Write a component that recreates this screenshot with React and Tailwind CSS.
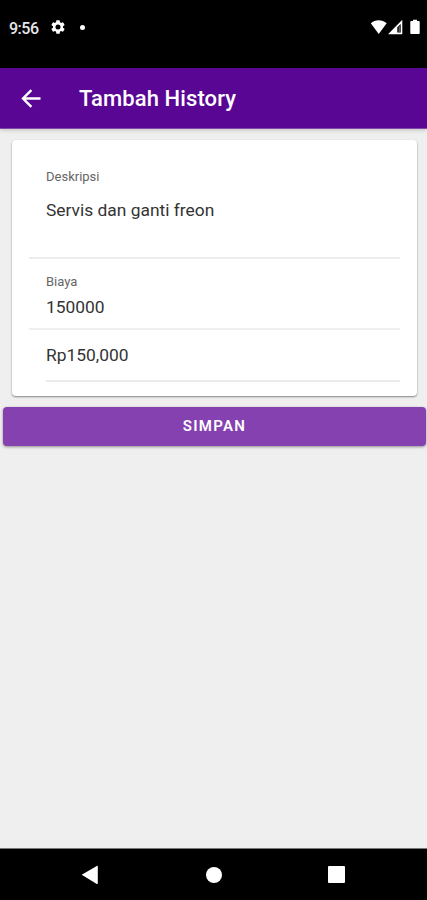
const StatusBar = () => {
    return (
        <div className="h-[68px] shrink-0 bg-black text-white flex items-start">
            <p className="w-[42px] pl-[9px] pt-[19px] text-[16px] leading-5 font-medium tracking-[-0.5px] text-gray-200">9:56</p>

            <svg className="ml-[9px] mt-[20px] w-[14px] h-[14px]" viewBox="2 2 20 20" fill="white">
                <path d="M19.14 12.94c.04-.3.06-.61.06-.94 0-.32-.02-.64-.07-.94l2.03-1.58c.18-.14.23-.41.12-.61l-1.92-3.32c-.12-.22-.37-.29-.59-.22l-2.39.96c-.5-.38-1.03-.7-1.62-.94l-.36-2.54c-.04-.24-.24-.41-.48-.41h-3.84c-.24 0-.43.17-.47.41l-.36 2.54c-.59.24-1.13.57-1.62.94l-2.39-.96c-.22-.08-.47 0-.59.22L2.74 8.87c-.12.21-.08.47.12.61l2.03 1.58c-.05.3-.09.63-.09.94s.02.64.07.94l-2.03 1.58c-.18.14-.23.41-.12.61l1.92 3.32c.12.22.37.29.59.22l2.39-.96c.5.38 1.03.7 1.62.94l.36 2.54c.05.24.24.41.48.41h3.84c.24 0 .44-.17.47-.41l.36-2.54c.59-.24 1.13-.56 1.62-.94l2.39.96c.22.08.47 0 .59-.22l1.92-3.32c.12-.22.07-.47-.12-.61l-2.01-1.58zM12 15.6a3.6 3.6 0 1 1 0-7.2 3.6 3.6 0 0 1 0 7.2z" />
            </svg>
            <span className="ml-[15px] mt-[25px] w-[5px] h-[5px] rounded-full bg-white"></span>

            <div className="ml-auto mr-[7px] mt-[19px] flex items-start">
                <svg className="w-[17px] h-[16px]" viewBox="0 0 17 16" fill="white">
                    <path d="M0.8 4.2C5 .2 12.2 .2 16.7 4.2L8.7 15z" />
                </svg>
                <svg className="w-[15px] h-[16px] ml-px" viewBox="0 0 15 16" fill="white">
                    <path fillRule="evenodd" d="M0 15.2L14.3 .8V15.2zM9.3 8.3V13.5H12.7V4.9z" />
                    <path d="M10.7 7.2h1v6.3h-1z" fill="#888" />
                </svg>
                <svg className="w-[10px] h-[16px] ml-[7px]" viewBox="0 0 10 16" fill="white">
                    <path d="M3 .8h4v1.2h1.7c.6 0 1 .4 1 1V14c0 .6-.4 1-1 1H1.3c-.6 0-1-.4-1-1V3c0-.6.4-1 1-1H3z" />
                </svg>
            </div>
        </div>
    )
}

const AppBar = () => {
    return (
        <header className="relative h-[61px] shrink-0 bg-[#5a0695] border-b border-[#8148a8] text-white flex items-center shadow-[0_1px_4px_rgba(0,0,0,0.2)]">
            <button className="ml-[21px] w-5 h-5">
                <svg className="w-5 h-5" viewBox="0 0 20 20" fill="none" stroke="white" strokeWidth="2.4">
                    <path d="M19.5 10.5H2.2M10.4 2.1L2 10.5l8.4 8.4" />
                </svg>
            </button>
            <h1 className="ml-[38px] pt-px text-[22px] leading-7 font-medium tracking-[0.1px]">Tambah History</h1>
        </header>
    )
}

const HistoryForm = () => {
    return (
        <div className="mt-[11px] ml-[12px] mr-[10px] h-[256px] rounded-[4px] bg-white pl-[17px] pr-[17px] shadow-[0_1px_2px_rgba(0,0,0,0.45)]">
            <div className="h-[119px] pl-[17px] pt-[29px] border-b-2 border-[#ececec]">
                <p className="text-[13px] leading-4 text-[#666]">Deskripsi</p>
                <p className="mt-[15px] text-[17.4px] leading-5 text-[#333]">Servis dan ganti freon</p>
            </div>
            <div className="h-[71px] pl-[17px] pt-[15px] border-b-2 border-[#efefef]">
                <p className="text-[13px] leading-4 text-[#666]">Biaya</p>
                <p className="mt-[7px] text-[17.4px] leading-5 text-[#333]">150000</p>
            </div>
            <div className="h-[52px] ml-[17px] pt-[15px] border-b-2 border-[#ebebeb]">
                <p className="text-[17.4px] leading-5 text-[#333]">Rp150,000</p>
            </div>
        </div>
    )
}

const NavigationBar = () => {
    return (
        <nav className="h-[52px] shrink-0 bg-black border-t border-[#777] flex items-center">
            <svg className="ml-[81px] w-[18px] h-5" viewBox="0 0 18 20" fill="white">
                <path d="M.7 9.8L15.8.9c.5-.3 1 0 1 .5v17c0 .5-.5.8-1 .5z" />
            </svg>
            <span className="ml-[107px] w-4 h-4 rounded-full bg-white"></span>
            <span className="ml-[106px] w-[17px] h-[17px] rounded-[1px] bg-white"></span>
        </nav>
    )
}

const App = () => {
    return (
        <div className="w-full h-screen flex flex-col overflow-hidden bg-[#efefef] font-['Roboto',sans-serif]">
            <StatusBar />
            <AppBar />
            <main className="grow">
                <HistoryForm />
                <button className="mt-[11px] ml-[3px] w-[423px] h-[39px] rounded-[4px] bg-[#8441af] text-white text-[15px] font-semibold tracking-[1.3px] flex items-center justify-center shadow-[0_1px_3px_rgba(0,0,0,0.4)]">SIMPAN</button>
            </main>
            <NavigationBar />
        </div>
    )
}

export default App
